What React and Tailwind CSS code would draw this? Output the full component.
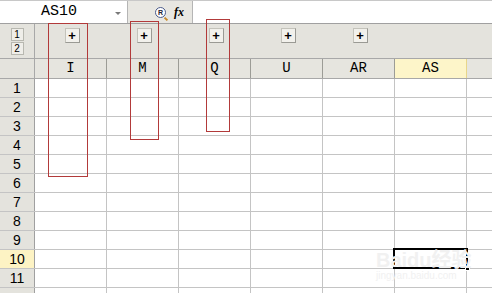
import React from "react";

const cols = ["I", "M", "Q", "U", "AR", "AS"];
const rows = [1, 2, 3, 4, 5, 6, 7, 8, 9, 10, 11, 12];

export default function App() {
    return (
        <div className="relative w-[492px] h-[293px] overflow-hidden bg-white" style={{ fontFamily: "'Liberation Mono', monospace" }}>
            {/* formula bar */}
            <div className="flex h-[24px] border-t border-[#c8c8c8] border-b border-b-[#a0a0a0] bg-[#e6e5e0]">
                <div className="relative w-[128px] bg-white border-r border-[#b5b5b5] flex items-center">
                    <span className="ml-[41px] text-[15px] text-black" style={{ fontFamily: "'Liberation Mono', monospace" }}>AS10</span>
                    <span className="absolute right-[6px] top-[11px] w-0 h-0 border-l-[3px] border-r-[3px] border-t-[3px] border-l-transparent border-r-transparent border-t-[#7a7a7a]" />
                </div>
                <div className="w-[64px] flex items-center pl-[27px] gap-[8px] bg-[#e8e7e2]">
                    <span className="relative w-[11px] h-[11px] rounded-full border border-[#4a5a8a] bg-white flex items-center justify-center text-[7px] font-bold text-[#223] leading-none" style={{ fontFamily: "'Liberation Sans', sans-serif" }}>
                        R
                        <span className="absolute -right-[3px] -bottom-[3px] w-[4px] h-[2px] bg-[#c98a2a] rotate-45" />
                    </span>
                    <span className="italic font-bold text-[12px] text-black" style={{ fontFamily: "'Liberation Serif', serif" }}>fx</span>
                </div>
                <div className="flex-1 bg-white border-l border-[#b5b5b5]" />
            </div>

            {/* outline area */}
            <div className="flex h-[35px] bg-[#e4e3dd] border-b border-[#a8a8a8]">
                <div className="w-[35px] border-r border-[#a8a8a8] flex flex-col items-center pt-[4px] gap-[1px]">
                    {[1, 2].map((n) => (
                        <div key={n} className="w-[13px] h-[13px] bg-[#efeee9] border border-[#b8b8b0] flex items-center justify-center text-[10px] text-black leading-none" style={{ fontFamily: "'Liberation Sans', sans-serif" }}>
                            {n}
                        </div>
                    ))}
                </div>
                {cols.map((c, i) => (
                    <div key={c} className="w-[72px] flex justify-center pt-[4px] pl-[2px]">
                        {i < 5 && (
                            <div className="w-[15px] h-[15px] bg-[#f2f1ec] border border-[#c4c3bb] border-r-[#9a9a94] border-b-[#9a9a94] flex items-center justify-center text-[13px] font-bold text-black leading-none" style={{ fontFamily: "'Liberation Sans', sans-serif" }}>
                                +
                            </div>
                        )}
                    </div>
                ))}
            </div>

            {/* column headers */}
            <div className="flex h-[20px] border-b border-[#a8a8a8]">
                <div className="w-[35px] bg-[#e4e3dd] border-r border-[#a8a8a8]" />
                {cols.map((c) => (
                    <div
                        key={c}
                        className={`w-[72px] border-r flex items-center justify-center text-[14px] text-black ${
                            c === "AS" ? "bg-[#fdf5c9] border-[#e8d68a]" : "bg-[#e6e5df] border-[#9c9c96]"
                        }`}
                    >
                        {c}
                    </div>
                ))}
                <div className="flex-1 bg-[#e6e5df]" />
            </div>

            {/* rows */}
            {rows.map((r) => (
                <div key={r} className="flex h-[19px] border-b border-[#c4c4c4]">
                    <div
                        className={`w-[35px] border-r border-[#a0a0a0] flex items-center justify-center text-[14px] text-black ${
                            r === 10 ? "bg-[#fdf3c4]" : "bg-[#e4e3dd]"
                        }`}
                        style={{ fontFamily: "'Liberation Sans', sans-serif" }}
                    >
                        {r < 12 ? r : ""}
                    </div>
                    {cols.map((c) => (
                        <div key={c} className="w-[72px] border-r border-[#c4c4c4]" />
                    ))}
                    <div className="flex-1" />
                </div>
            ))}

            {/* red annotation boxes */}
            <div className="absolute left-[48px] top-[23px] w-[40px] h-[154px] border border-[#b23a3a]" />
            <div className="absolute left-[130px] top-[21px] w-[29px] h-[119px] border border-[#b23a3a]" />
            <div className="absolute left-[206px] top-[19px] w-[24px] h-[113px] border border-[#b23a3a]" />

            {/* active cell */}
            <div className="absolute left-[393px] top-[248px] w-[75px] h-[21px] border-2 border-black" />
            <div className="absolute left-[465px] top-[266px] w-[5px] h-[5px] bg-black border border-white" />

            {/* watermark */}
            <div className="absolute left-[376px] top-[250px] text-[20px] font-bold text-[#f1f1f1] leading-none" style={{ fontFamily: "'Liberation Sans', 'Noto Sans CJK SC', sans-serif" }}>
                Baidu经验
            </div>
            <div className="absolute left-[376px] top-[271px] text-[10px] text-[#f1f1f1] leading-none" style={{ fontFamily: "'Liberation Sans', sans-serif" }}>
                jingyan.baidu.com
            </div>
        </div>
    );
}
